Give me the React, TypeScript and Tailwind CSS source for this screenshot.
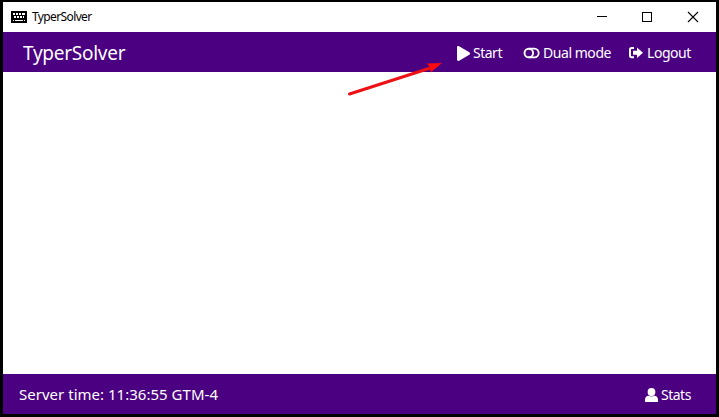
import type { ReactNode } from "react";
import { FaPlay } from "react-icons/fa";

function KeyboardIcon() {
  return (
    <svg width="16" height="12" viewBox="0 0 16 12" shapeRendering="crispEdges" fill="none" stroke="#000">
      <rect width="16" height="12" fill="#000" stroke="none" />
      <path stroke="#fff" strokeWidth="2" d="M2 3h2M5 3h2M8 3h2M11 3h3M3 6h2M6 6h2M9 6h2M12 6h1" />
      <path stroke="#fff" strokeWidth="1" d="M2 9.5h1M4 9.5h8M13 9.5h1" />
    </svg>
  );
}

function ToggleIcon() {
  return (
    <svg width="17" height="12" viewBox="0 0 17 12" fill="none" stroke="#fff">
      <circle cx="5.8" cy="6" r="4.3" strokeWidth="1.9" />
      <path d="M6 1.7h5.4a4.3 4.3 0 0 1 0 8.6H6" strokeWidth="1.8" />
    </svg>
  );
}

function LogoutIcon() {
  return (
    <svg width="14" height="14" viewBox="0 0 14 14" fill="none" stroke="#fff">
      <path d="M5 2H2.600Q1 2 1 3.600v6Q1 11.200 2.600 11.200H5" strokeWidth="2" />
      <path d="M4 4.800h4V1.600L14 6.700 8 12V8.800H4z" fill="#fff" stroke="none" />
    </svg>
  );
}

function UserIcon() {
  return (
    <svg width="13" height="14" viewBox="0 0 13 14" fill="#fff">
      <ellipse cx="6.5" cy="4.1" rx="3.9" ry="4.1" />
      <path d="M0 14v-2.300c0-2.500 1.600-3.900 3.700-3.900 1.800 1 3.800 1 5.600 0 2.100 0 3.700 1.400 3.700 3.900V14z" />
    </svg>
  );
}

function NavItem({ icon, children, className = "" }: { icon: ReactNode; children: ReactNode; className?: string }) {
  return (
    <button className={`flex items-center whitespace-nowrap text-left text-[14px] leading-5 ${className}`}>
      {icon}
      {children}
    </button>
  );
}

function TitleBar() {
  return (
    <div className="flex h-[30px] shrink-0 items-center pl-2 text-black">
      <KeyboardIcon />
      <span className="ml-[5px] text-[12px] leading-4 tracking-[-0.62px]">TyperSolver</span>
      <svg className="mr-[17px] ml-auto" width="102" height="12" viewBox="0 0 102 12" fill="none" stroke="#000">
        <path d="M0 5.5h10" />
        <rect x="45.5" y="1.5" width="9" height="9" />
        <path d="M91 1l10 10M101 1l-10 10" strokeWidth="1.1" />
      </svg>
    </div>
  );
}

export default function App() {
  return (
    <div className="flex h-[417px] w-[719px] flex-col border-t-2 border-r-3 border-b-3 border-l-3 border-black bg-white font-['Noto_Sans','Open_Sans',sans-serif] text-white">
      <TitleBar />
      <header className="flex h-10 shrink-0 items-center bg-[#4b0082] pt-0.5 pr-[22px] pl-5">
        <h1 className="text-[19px] leading-7 tracking-[-0.26px]">TyperSolver</h1>
        <nav className="ml-auto flex">
          <NavItem className="w-[66px] gap-[3px] tracking-[-0.5px]" icon={<FaPlay className="h-[15px] w-[13px]" />}>
            Start
          </NavItem>
          <NavItem className="w-[106px] gap-[3px] tracking-[-0.45px]" icon={<ToggleIcon />}>
            Dual mode
          </NavItem>
          <NavItem className="w-[65px] gap-[4px] tracking-[-0.45px]" icon={<LogoutIcon />}>
            Logout
          </NavItem>
        </nav>
      </header>
      <main className="relative grow">
        <svg className="absolute top-[-14px] left-[341px]" width="105" height="45" viewBox="0 0 105 45">
          <path d="M5.5 36L88 9.5" stroke="#ed1015" strokeWidth="3" strokeLinecap="round" />
          <path d="M98 5L83 5.5l3.5 4.5 0 4.5z" fill="#ff0a10" />
        </svg>
      </main>
      <footer className="flex h-[40px] shrink-0 items-center justify-between bg-[#4b0082] pr-[22px] pl-4">
        <span className="text-[15px] leading-5 tracking-[0.02px]">Server time: 11:36:55 GTM-4</span>
        <NavItem className="w-[49px] gap-[3px] pt-0.5 tracking-[-0.5px]" icon={<UserIcon />}>
          Stats
        </NavItem>
      </footer>
    </div>
  );
}
